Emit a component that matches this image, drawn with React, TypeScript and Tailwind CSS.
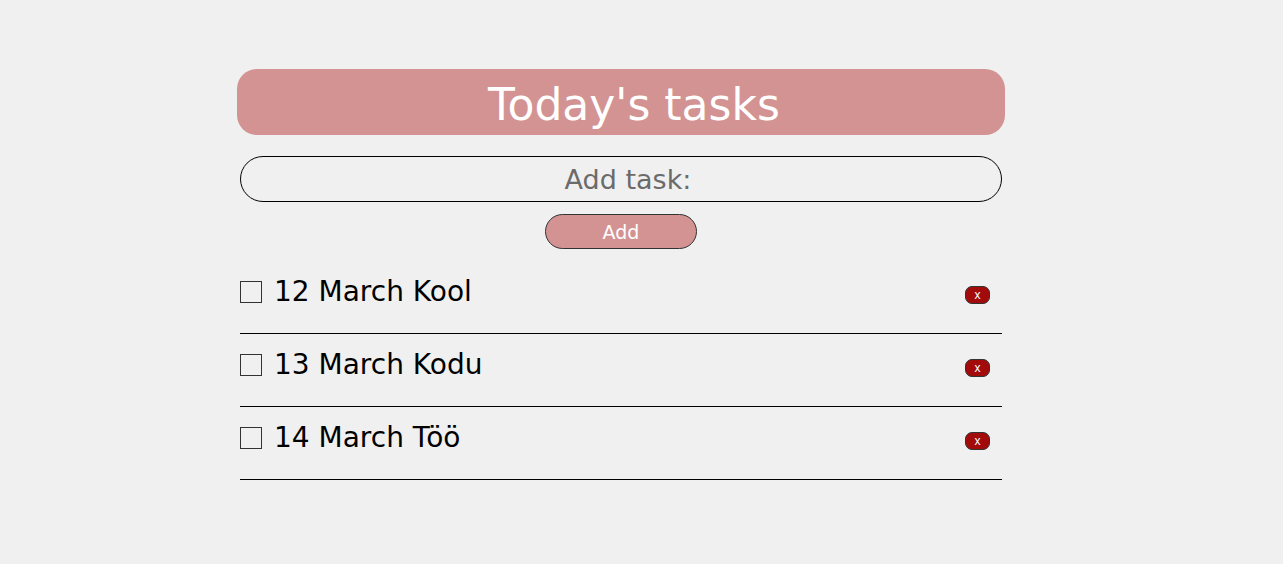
import React, { useState } from 'react';

interface Task {
  id: number;
  text: string;
  done: boolean;
}

const initialTasks: Task[] = [
  { id: 1, text: '12 March Kool', done: false },
  { id: 2, text: '13 March Kodu', done: false },
  { id: 3, text: '14 March Töö', done: false },
];

export default function App() {
  const [tasks, setTasks] = useState<Task[]>(initialTasks);
  const [draft, setDraft] = useState('');

  const addTask = () => {
    if (!draft.trim()) return;
    setTasks([...tasks, { id: Date.now(), text: draft.trim(), done: false }]);
    setDraft('');
  };

  const toggleTask = (id: number) => {
    setTasks(tasks.map(t => (t.id === id ? { ...t, done: !t.done } : t)));
  };

  const removeTask = (id: number) => {
    setTasks(tasks.filter(t => t.id !== id));
  };

  return (
    <div className="min-h-[564px] bg-[#f0f0f0] pt-[69px] font-['Comic_Sans_MS','DejaVu_Sans',sans-serif]">
      <div className="ml-[237px] w-[768px]">
        {/* Header */}
        <div className="flex h-[66px] items-center justify-center rounded-[20px] bg-[#d39393] pl-[26px] pt-[5px]">
          <h1 className="text-[44px] leading-none text-white">Today's tasks</h1>
        </div>

        <div className="px-[3px]">
          {/* Input */}
          <input
            type="text"
            value={draft}
            placeholder="Add task:"
            onChange={e => setDraft(e.target.value)}
            className="mt-[21px] block h-[46px] w-full rounded-full border border-black bg-[#f0f0f0] pl-[14px] text-center text-[27px] text-[#555] outline-none placeholder:text-[#6b6b6b]"
          />

          <div className="mt-[12px] flex justify-center">
            <button
              onClick={addTask}
              className="h-[35px] w-[152px] rounded-full border border-[#333] bg-[#d39393] pt-[2px] text-[19px] text-white"
            >
              Add
            </button>
          </div>

          {/* Task list */}
          <ul className="mt-[12px]">
            {tasks.map(task => (
              <li
                key={task.id}
                className="flex h-[73px] items-center border-b border-black pb-[10px]"
              >
                <input
                  type="checkbox"
                  checked={task.done}
                  onChange={() => toggleTask(task.id)}
                  className="h-[22px] w-[22px] appearance-none border border-[#333] bg-[#f0f0f0] checked:bg-[#d39393]"
                />
                <span className={`ml-[12px] text-[28px] text-black ${task.done ? 'line-through' : ''}`}>
                  {task.text}
                </span>
                <button
                  onClick={() => removeTask(task.id)}
                  className="ml-auto mr-[12px] mt-[5px] flex h-[18px] w-[25px] items-center justify-center rounded-[7px] border border-[#333] bg-[#a30b0b] font-['Liberation_Sans',sans-serif] text-[12px] leading-none text-white"
                >
                  x
                </button>
              </li>
            ))}
          </ul>
        </div>
      </div>
    </div>
  );
}
